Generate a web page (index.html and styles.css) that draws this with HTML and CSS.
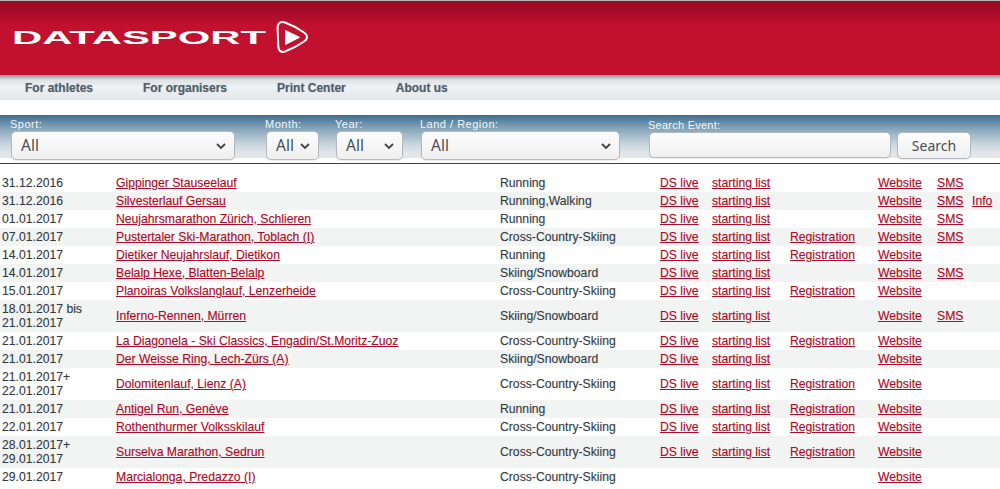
FILE: index.html
```html
<!DOCTYPE html>
<html lang="en">
<head>
<meta charset="utf-8">
<title>Datasport</title>
<link rel="stylesheet" href="styles.css">
</head>
<body>
<header class="brand">
  <svg class="logo" width="300" height="40" viewBox="0 0 300 40" aria-label="Datasport">
    <text class="logo-text" x="-1" y="27" textLength="254" lengthAdjust="spacingAndGlyphs">DATASPORT</text>
    <path class="logo-ring" d="M264.6 12 C264.2 6.5 267 4 272 5.5 C279 8 286 12 291 15.5 C295 18 295 22 291 24.5 C286 28 279 32 272 34.5 C267 36 265.5 33 265.3 29 C265 23 264.8 17 264.6 12Z"/>
    <path class="logo-play" d="M272.5 13.5 L286.5 20.3 L272.5 27.5 Z"/>
  </svg>
</header>
<nav class="nav">
  <a href="#">For athletes</a>
  <a href="#">For organisers</a>
  <a href="#">Print Center</a>
  <a href="#">About us</a>
</nav>
<form class="filters">
  <label class="field sport"><span>Sport:</span><select><option>All</option></select></label>
  <label class="field month"><span>Month:</span><select><option>All</option></select></label>
  <label class="field year"><span>Year:</span><select><option>All</option></select></label>
  <label class="field land"><span>Land / Region:</span><select><option>All</option></select></label>
  <label class="field search"><span>Search Event:</span><input type="text"></label>
  <button type="button" class="search-btn">Search</button>
</form>
<table class="events">
  <colgroup><col class="c-date"><col class="c-name"><col class="c-sport"><col class="c-live"><col class="c-start"><col class="c-reg"><col class="c-web"><col class="c-sms"><col class="c-info"></colgroup>
  <tbody>
  <tr><td>31.12.2016</td><td><a href="#">Gippinger Stauseelauf</a></td><td>Running</td><td><a href="#">DS live</a></td><td><a href="#">starting list</a></td><td></td><td><a href="#">Website</a></td><td><a href="#">SMS</a></td><td></td></tr>
  <tr><td>31.12.2016</td><td><a href="#">Silvesterlauf Gersau</a></td><td>Running,Walking</td><td><a href="#">DS live</a></td><td><a href="#">starting list</a></td><td></td><td><a href="#">Website</a></td><td><a href="#">SMS</a></td><td><a href="#">Info</a></td></tr>
  <tr><td>01.01.2017</td><td><a href="#">Neujahrsmarathon Zürich, Schlieren</a></td><td>Running</td><td><a href="#">DS live</a></td><td><a href="#">starting list</a></td><td></td><td><a href="#">Website</a></td><td><a href="#">SMS</a></td><td></td></tr>
  <tr><td>07.01.2017</td><td><a href="#">Pustertaler Ski-Marathon, Toblach (I)</a></td><td>Cross-Country-Skiing</td><td><a href="#">DS live</a></td><td><a href="#">starting list</a></td><td><a href="#">Registration</a></td><td><a href="#">Website</a></td><td><a href="#">SMS</a></td><td></td></tr>
  <tr><td>14.01.2017</td><td><a href="#">Dietiker Neujahrslauf, Dietikon</a></td><td>Running</td><td><a href="#">DS live</a></td><td><a href="#">starting list</a></td><td><a href="#">Registration</a></td><td><a href="#">Website</a></td><td></td><td></td></tr>
  <tr><td>14.01.2017</td><td><a href="#">Belalp Hexe, Blatten-Belalp</a></td><td>Skiing/Snowboard</td><td><a href="#">DS live</a></td><td><a href="#">starting list</a></td><td></td><td><a href="#">Website</a></td><td><a href="#">SMS</a></td><td></td></tr>
  <tr><td>15.01.2017</td><td><a href="#">Planoiras Volkslanglauf, Lenzerheide</a></td><td>Cross-Country-Skiing</td><td><a href="#">DS live</a></td><td><a href="#">starting list</a></td><td><a href="#">Registration</a></td><td><a href="#">Website</a></td><td></td><td></td></tr>
  <tr><td>18.01.2017 bis<br>21.01.2017</td><td><a href="#">Inferno-Rennen, Mürren</a></td><td>Skiing/Snowboard</td><td><a href="#">DS live</a></td><td><a href="#">starting list</a></td><td></td><td><a href="#">Website</a></td><td><a href="#">SMS</a></td><td></td></tr>
  <tr><td>21.01.2017</td><td><a href="#">La Diagonela - Ski Classics, Engadin/St.Moritz-Zuoz</a></td><td>Cross-Country-Skiing</td><td><a href="#">DS live</a></td><td><a href="#">starting list</a></td><td><a href="#">Registration</a></td><td><a href="#">Website</a></td><td></td><td></td></tr>
  <tr><td>21.01.2017</td><td><a href="#">Der Weisse Ring, Lech-Zürs (A)</a></td><td>Skiing/Snowboard</td><td><a href="#">DS live</a></td><td><a href="#">starting list</a></td><td></td><td><a href="#">Website</a></td><td></td><td></td></tr>
  <tr><td>21.01.2017+<br>22.01.2017</td><td><a href="#">Dolomitenlauf, Lienz (A)</a></td><td>Cross-Country-Skiing</td><td><a href="#">DS live</a></td><td><a href="#">starting list</a></td><td><a href="#">Registration</a></td><td><a href="#">Website</a></td><td></td><td></td></tr>
  <tr><td>21.01.2017</td><td><a href="#">Antigel Run, Genève</a></td><td>Running</td><td><a href="#">DS live</a></td><td><a href="#">starting list</a></td><td><a href="#">Registration</a></td><td><a href="#">Website</a></td><td></td><td></td></tr>
  <tr><td>22.01.2017</td><td><a href="#">Rothenthurmer Volksskilauf</a></td><td>Cross-Country-Skiing</td><td><a href="#">DS live</a></td><td><a href="#">starting list</a></td><td><a href="#">Registration</a></td><td><a href="#">Website</a></td><td></td><td></td></tr>
  <tr><td>28.01.2017+<br>29.01.2017</td><td><a href="#">Surselva Marathon, Sedrun</a></td><td>Cross-Country-Skiing</td><td><a href="#">DS live</a></td><td><a href="#">starting list</a></td><td><a href="#">Registration</a></td><td><a href="#">Website</a></td><td></td><td></td></tr>
  <tr><td>29.01.2017</td><td><a href="#">Marcialonga, Predazzo (I)</a></td><td>Cross-Country-Skiing</td><td></td><td></td><td></td><td><a href="#">Website</a></td><td></td><td></td></tr>
  </tbody>
</table>
</body>
</html>
```
FILE: styles.css
```css
* { box-sizing: border-box; }
html, body { margin: 0; padding: 0; }
body {
  width: 1000px;
  height: 489px;
  overflow: hidden;
  background: #fff;
  font-family: "Liberation Sans", Arial, sans-serif;
  font-size: 12px;
  color: #333b44;
}
.brand {
  height: 75px;
  padding: 16px 0 0 13px;
  border-top: 1px solid #b5b5b5;
  background: linear-gradient(#970a23 0, #a20a26 8px, #c1112f 24px, #c1112f 100%);
}
.logo { display: block; overflow: visible; }
.logo-text {
  font-family: "Liberation Sans", Arial, sans-serif;
  font-weight: 700;
  font-size: 18px;
  fill: #fff;
}
.logo-ring { fill: none; stroke: #fff; stroke-width: 2; }
.logo-play { fill: #fff; stroke: #fff; stroke-width: 1; stroke-linejoin: round; }
.nav {
  height: 25px;
  display: flex;
  align-items: center;
  gap: 50px;
  padding: 1px 0 0 25px;
  background: linear-gradient(#8f969b 0, #dfe3e6 5px, #f0f2f4 12px, #e3e7ea 100%);
}
.nav a {
  font-weight: 700;
  font-size: 12px;
  color: #545f6b;
  text-decoration: none;
  text-shadow: 0 0 1px rgba(84, 95, 107, .5);
}
.filters {
  margin-top: 15px;
  height: 43px;
  display: flex;
  align-items: flex-start;
  padding: 3px 0 0 10px;
  background: linear-gradient(#3f6d90 0, #7f9fb5 12px, #c5d2dc 28px, #e2e6ea 38px);
  position: relative;
}
.filters::after {
  content: "";
  position: absolute;
  left: 0;
  right: 0;
  bottom: -6px;
  height: 1px;
  background: #3a434c;
}
.field { display: flex; flex-direction: column; }
.field span {
  font-size: 11px;
  line-height: 13px;
  letter-spacing: 0.5px;
  color: #f2f5f7;
}
.field select, .field input, .search-btn {
  font-family: "Noto Sans", sans-serif;
  color: #4a4f55;
  border: 1px solid #b4b9bd;
  border-radius: 5px;
  background: linear-gradient(#fdfdfd, #efefef);
  box-shadow: 0 1px 1px rgba(0, 0, 0, .08);
}
.field select {
  appearance: none;
  height: 29px;
  margin-left: 1px;
  padding: 0 0 2px 9px;
  font-size: 15.5px;
  background-image: url("data:image/svg+xml,%3Csvg xmlns='http://www.w3.org/2000/svg' width='10' height='6'%3E%3Cpath d='M1 1l4 4 4-4' fill='none' stroke='%23444' stroke-width='1.8'/%3E%3C/svg%3E"), linear-gradient(#fdfdfd, #efefef);
  background-repeat: no-repeat;
  background-position: right 8.5px center, 0 0;
}
.sport { width: 225px; margin-right: 30px; }
.sport select { width: 224px; }
.month { width: 54px; margin-right: 16px; }
.month select { width: 53px; }
.year { width: 71px; margin-right: 14px; }
.year select { width: 67px; }
.land { width: 228px; }
.land select { width: 199px; }
.search { width: 249px; padding-top: 1px; }
.search span { letter-spacing: .25px; }
.field input {
  width: 242px;
  height: 26px;
  margin-left: 1px;
  padding: 0 8px;
}
.search-btn {
  width: 74px;
  height: 27px;
  margin-top: 14px;
  font-size: 14px;
  padding: 0;
}
.events {
  width: 1000px;
  margin-top: 16px;
  border-collapse: collapse;
  table-layout: fixed;
}
.c-date { width: 114px; }
.c-name { width: 384px; }
.c-sport { width: 160px; }
.c-live { width: 52px; }
.c-start { width: 78px; }
.c-reg { width: 88px; }
.c-web { width: 59px; }
.c-sms { width: 35px; }
.c-info { width: 30px; }
.events td {
  padding: 2px;
  height: 18px;
  line-height: 14px;
  font-size: 12.2px;
  white-space: nowrap;
  vertical-align: middle;
  text-shadow: 0 0 1px rgba(51, 59, 68, .25);
}
.events tr:nth-child(even) { background: #f2f4f3; }
.events a { color: #ad0d2a; text-decoration: underline; text-shadow: 0 0 1px rgba(173, 13, 42, .3); }
```
